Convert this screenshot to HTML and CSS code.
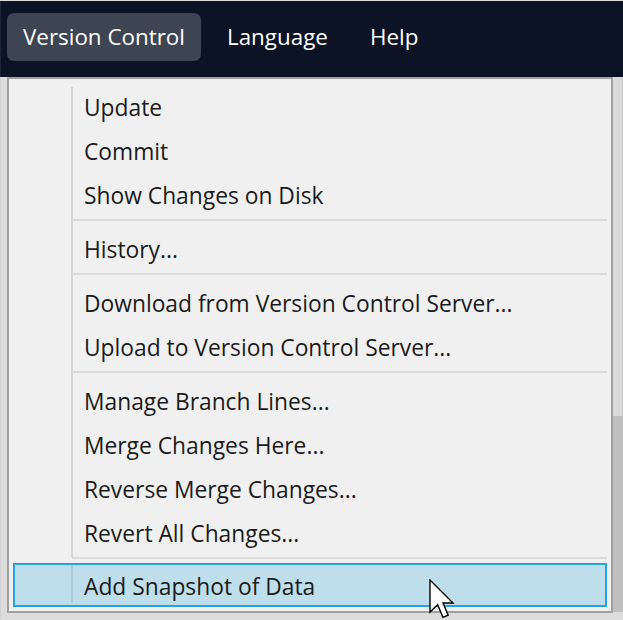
FILE: index.html
```html
<!DOCTYPE html>
<html>
<head>
<meta charset="utf-8">
<link rel="stylesheet" href="styles.css">
</head>
<body>
<div class="topbar">
  <div class="top-item active">Version Control</div>
  <div class="top-item">Language</div>
  <div class="top-item">Help</div>
</div>
<div class="workspace">
  <div class="strip-left"></div>
  <div class="menu">
    <div class="item">Update</div>
    <div class="item">Commit</div>
    <div class="item">Show Changes on Disk</div>
    <div class="sep"></div>
    <div class="item">History...</div>
    <div class="sep"></div>
    <div class="item">Download from Version Control Server...</div>
    <div class="item">Upload to Version Control Server...</div>
    <div class="sep"></div>
    <div class="item">Manage Branch Lines...</div>
    <div class="item">Merge Changes Here...</div>
    <div class="item">Reverse Merge Changes...</div>
    <div class="item">Revert All Changes...</div>
    <div class="sep"></div>
    <div class="item hover">Add Snapshot of Data
      <svg class="cursor" width="26" height="40" viewBox="0 0 13 20"><path d="M0.5 0.5 L0.5 16.5 L4.3 12.9 L7 19.2 L9.6 18.1 L7 12 L12 12 Z" fill="#fff" stroke="#000" stroke-width="0.7" stroke-linejoin="miter"/></svg>
    </div>
  </div>
  <div class="strip-right"><div class="sr-top"></div><div class="sr-bottom"></div></div>
</div>
</body>
</html>
```
FILE: styles.css
```css
html, body { margin: 0; padding: 0; }
body {
  width: 623px;
  height: 620px;
  overflow: hidden;
  background: #dcdcdc;
  font-family: "Open Sans", "Noto Sans", sans-serif;
}
.topbar {
  margin-top: 1px;
  height: 76px;
  background: #0b1325;
  display: flex;
  align-items: flex-start;
  padding: 12px 0 0 6px;
  gap: 10px;
  border-left: 1px solid #1d2535;
  box-sizing: border-box;
}
.top-item {
  color: #ffffff;
  font-size: 22.4px;
  height: 48px;
  line-height: 47px;
  padding: 0 16px;
  border-radius: 7px;
}
.top-item.active { background: #3d4452; }
.workspace {
  display: flex;
  height: 543px;
}
.strip-left { width: 7px; background: #dcdcdc; border-left: 1px solid #d2d2d2; box-sizing: border-box; }
.menu {
  width: 606px;
  height: 536px;
  box-sizing: border-box;
  border: 2px solid #a0a0a0;
  background: #f0f0f0 linear-gradient(#d6d6d6, #d6d6d6) 62px 8px / 2px 470px no-repeat;
  padding-top: 5px;
  display: flex;
  flex-direction: column;
}
.item {
  position: relative;
  height: 44px;
  line-height: 44px;
  margin: 0 4px;
  border: 2px solid transparent;
  box-sizing: border-box;
  padding-left: 69px;
  font-size: 22.8px;
  color: #1b1b1b;
  white-space: nowrap;
}
.item.hover {
  margin-top: -1px;
  background: #bfdeeb linear-gradient(#aacadb, #aacadb) 56px 0 / 2px 38px no-repeat;
  border-color: #2aa2de;
  line-height: 43px;
}
.sep {
  height: 2px;
  margin: 3px 4px 5px 63px;
  background: #d9d9d9;
}
.cursor {
  position: absolute;
  left: 414px;
  top: 14px;
}
.strip-right { flex: 1; display: flex; flex-direction: column; }
.sr-top { height: 339px; background: #dadada; border-right: 1px solid #c4c4c4; }
.sr-bottom { height: 196px; background: #c0c0c0; }
```
